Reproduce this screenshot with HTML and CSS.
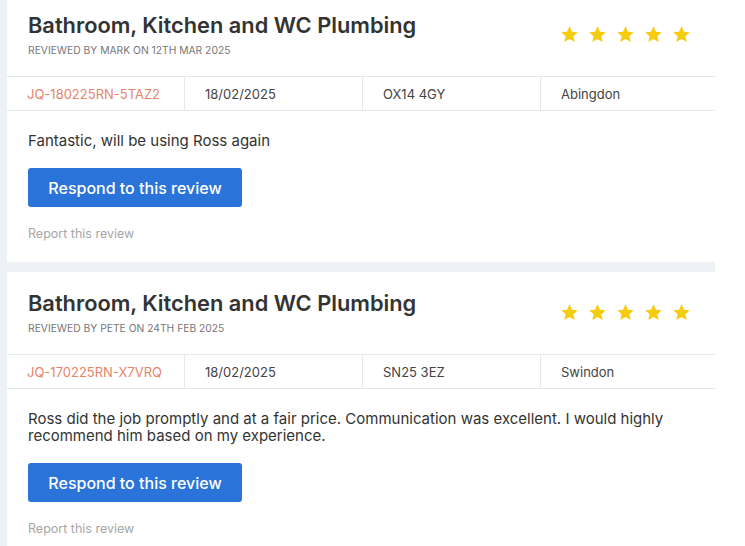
FILE: index.html
```html
<!DOCTYPE html>
<html>
<head>
<meta charset="utf-8">
<link rel="stylesheet" href="styles.css">
</head>
<body>
<div class="list">
  <div class="card">
    <div class="head">
      <div>
        <h2 class="title">Bathroom, Kitchen and WC Plumbing</h2>
        <div class="meta">Reviewed by Mark on 12th Mar 2025</div>
      </div>
      <div class="stars">
        <svg viewBox="0 0 24 24"><path d="M12 1.5l3.1 6.9 7.4.7-5.6 5 1.7 7.4L12 17.6l-6.6 3.9 1.7-7.4-5.6-5 7.4-.7z"/></svg>
        <svg viewBox="0 0 24 24"><path d="M12 1.5l3.1 6.9 7.4.7-5.6 5 1.7 7.4L12 17.6l-6.6 3.9 1.7-7.4-5.6-5 7.4-.7z"/></svg>
        <svg viewBox="0 0 24 24"><path d="M12 1.5l3.1 6.9 7.4.7-5.6 5 1.7 7.4L12 17.6l-6.6 3.9 1.7-7.4-5.6-5 7.4-.7z"/></svg>
        <svg viewBox="0 0 24 24"><path d="M12 1.5l3.1 6.9 7.4.7-5.6 5 1.7 7.4L12 17.6l-6.6 3.9 1.7-7.4-5.6-5 7.4-.7z"/></svg>
        <svg viewBox="0 0 24 24"><path d="M12 1.5l3.1 6.9 7.4.7-5.6 5 1.7 7.4L12 17.6l-6.6 3.9 1.7-7.4-5.6-5 7.4-.7z"/></svg>
      </div>
    </div>
    <div class="details">
      <div class="cell ref">JQ-180225RN-5TAZ2</div>
      <div class="cell">18/02/2025</div>
      <div class="cell">OX14 4GY</div>
      <div class="cell">Abingdon</div>
    </div>
    <div class="body">
      <p class="text">Fantastic, will be using Ross again</p>
      <button class="btn">Respond to this review</button>
      <a class="report">Report this review</a>
    </div>
  </div>
  <div class="card">
    <div class="head">
      <div>
        <h2 class="title">Bathroom, Kitchen and WC Plumbing</h2>
        <div class="meta">Reviewed by Pete on 24th Feb 2025</div>
      </div>
      <div class="stars">
        <svg viewBox="0 0 24 24"><path d="M12 1.5l3.1 6.9 7.4.7-5.6 5 1.7 7.4L12 17.6l-6.6 3.9 1.7-7.4-5.6-5 7.4-.7z"/></svg>
        <svg viewBox="0 0 24 24"><path d="M12 1.5l3.1 6.9 7.4.7-5.6 5 1.7 7.4L12 17.6l-6.6 3.9 1.7-7.4-5.6-5 7.4-.7z"/></svg>
        <svg viewBox="0 0 24 24"><path d="M12 1.5l3.1 6.9 7.4.7-5.6 5 1.7 7.4L12 17.6l-6.6 3.9 1.7-7.4-5.6-5 7.4-.7z"/></svg>
        <svg viewBox="0 0 24 24"><path d="M12 1.5l3.1 6.9 7.4.7-5.6 5 1.7 7.4L12 17.6l-6.6 3.9 1.7-7.4-5.6-5 7.4-.7z"/></svg>
        <svg viewBox="0 0 24 24"><path d="M12 1.5l3.1 6.9 7.4.7-5.6 5 1.7 7.4L12 17.6l-6.6 3.9 1.7-7.4-5.6-5 7.4-.7z"/></svg>
      </div>
    </div>
    <div class="details">
      <div class="cell ref">JQ-170225RN-X7VRQ</div>
      <div class="cell">18/02/2025</div>
      <div class="cell">SN25 3EZ</div>
      <div class="cell">Swindon</div>
    </div>
    <div class="body">
      <p class="text">Ross did the job promptly and at a fair price. Communication was excellent. I would highly recommend him based on my experience.</p>
      <button class="btn">Respond to this review</button>
      <a class="report">Report this review</a>
    </div>
  </div>
</div>
</body>
</html>
```
FILE: styles.css
```css
html, body {
  margin: 0;
  padding: 0;
  background: #ffffff;
  font-family: Inter, "Open Sans", sans-serif;
  color: #333333;
}
.list {
  width: 708px;
  padding-left: 7px;
  background: #eef1f5;
  margin-top: -6px;
  display: flex;
  flex-direction: column;
  gap: 10px;
}
.card {
  background: #ffffff;
}
.head {
  display: flex;
  justify-content: space-between;
  align-items: flex-start;
  padding: 18px 24px 0 21px;
  height: 64px;
}
.title {
  margin: 0;
  font-size: 21.8px;
  line-height: 26px;
  font-weight: 600;
  color: #333333;
}
.meta {
  margin-top: 5px;
  font-size: 10.3px;
  line-height: 14px;
  text-transform: uppercase;
  color: #777777;
}
.stars {
  display: flex;
  gap: 9px;
  margin-top: 13px;
}
.stars svg {
  width: 19px;
  height: 19px;
  fill: #f8cc0e;
}
.details {
  display: grid;
  grid-template-columns: 177px 178px 178px 1fr;
  border-top: 1px solid #e6e8eb;
  border-bottom: 1px solid #e6e8eb;
}
.cell {
  padding: 0 20px;
  height: 33px;
  display: flex;
  align-items: center;
  font-size: 13px;
  color: #444444;
  border-left: 1px solid #e6e8eb;
}
.cell:first-child {
  border-left: none;
}
.ref {
  color: #e5846a;
}
.body {
  padding: 21px 21px 21px 21px;
  display: flex;
  flex-direction: column;
  align-items: flex-start;
}
.text {
  margin: 0;
  font-size: 15px;
  line-height: 17px;
  color: #333333;
}
.btn {
  margin-top: 19px;
  width: 214px;
  height: 39px;
  border: none;
  border-radius: 3px;
  background: #2a74d9;
  color: #ffffff;
  font-family: inherit;
  font-size: 16px;
  font-weight: 500;
}
.report {
  margin-top: 20px;
  font-size: 12.5px;
  line-height: 14px;
  color: #a6a6a6;
}
```
